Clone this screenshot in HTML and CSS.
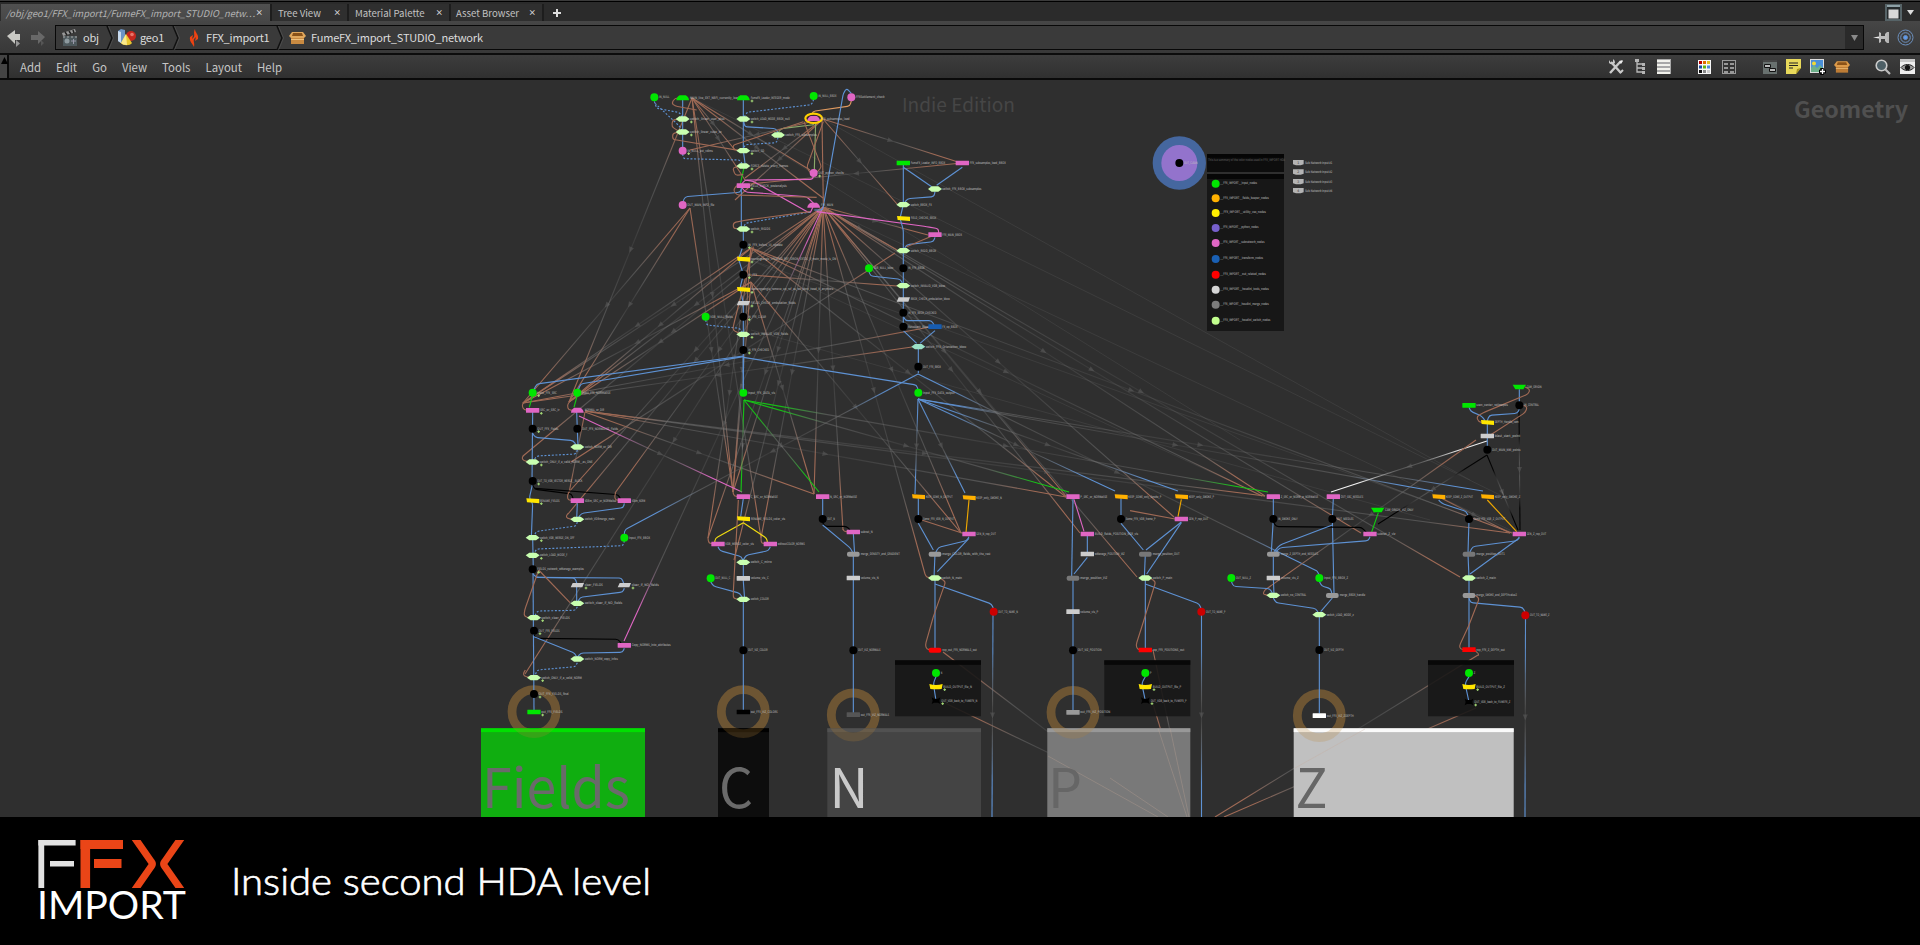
FILE: index.html
```
<!DOCTYPE html>
<html lang="en">
<head>
<meta charset="utf-8">
<title>FumeFX import network</title>
<link rel="stylesheet" href="styles.css">
</head>
<body>
<div class="app">
  <div class="tabs">
    <div class="tab tab-active"><span class="tab-name">/obj/geo1/FFX_import1/FumeFX_import_STUDIO_netw…</span><span class="close">×</span></div>
    <div class="tab tab-tree"><span class="tab-name">Tree View</span><span class="close">×</span></div>
    <div class="tab tab-material"><span class="tab-name">Material Palette</span><span class="close">×</span></div>
    <div class="tab tab-asset"><span class="tab-name">Asset Browser</span><span class="close">×</span></div>
    <svg class="plus" width="10" height="10" viewBox="0 0 10 10"><path d="M5 1v8M1 5h8" stroke="#ddd" stroke-width="2"/></svg>
    <div class="tabs-right">
      <svg width="17" height="17" viewBox="0 0 17 17"><rect width="17" height="17" fill="#566367"/><rect x="2" y="2" width="13" height="13" fill="#262b2d"/><rect x="2" y="1" width="13" height="2" fill="#8ea0a6"/><rect x="3.500" y="5.500" width="10" height="9" fill="#d8d8d8"/></svg>
      <svg width="7" height="5" viewBox="0 0 7 5"><path d="M0 0h7L3.500 5z" fill="#ddd"/></svg>
    </div>
  </div>

  <div class="pathbar">
    <svg class="nav" width="40" height="22" viewBox="0 0 40 22"><path d="M1 8L9 2v4h5v6H9v4z" fill="#c9c9c4"/><path d="M10 12v7l4-3.500z" fill="#999"/><path d="M39 9L32 3v4h-7v5h7v4z" fill="#686868"/><path d="M35 12v6l3-3z" fill="#555"/></svg>
    <div class="path">
      <div class="crumb crumb-obj">
        <svg width="18" height="20" viewBox="0 0 18 20"><path d="M1 5l13-4 1 3L2 8z" fill="#999"/><path d="M4 4l2 3M8 3l2 3M12 2l1 3" stroke="#222" stroke-width="1.500"/><rect x="2" y="8" width="14" height="10" fill="#4e595d"/><path d="M2 9h14" stroke="#aaa" stroke-dasharray="2 2"/><circle cx="6" cy="13" r="2.500" fill="#8d999e"/><path d="M10 13h5M12.500 11v5" stroke="#99a" /></svg>
        <span>obj</span>
      </div>
      <svg class="sep" width="8" height="24" viewBox="0 0 8 24"><path d="M1 0l5 12-5 12" fill="none" stroke="#111" stroke-width="1.500"/><path d="M2.500 0l5 12-5 12" fill="none" stroke="#555" stroke-width=".7"/></svg>
      <div class="crumb crumb-geo">
        <svg width="18" height="18" viewBox="0 0 18 18"><path d="M0 2l3-2 4 1v11l-4 2-3-2z" fill="#6c94c4"/><path d="M0 2l3 1v11l-3-2z" fill="#c8daee"/><circle cx="13" cy="7" r="5" fill="#c5281f"/><circle cx="14" cy="5.500" r="1.800" fill="#e8766b"/><path d="M8 5l6 9c-2 3-9 3-11 0z" fill="#e8c62f"/><path d="M8 5l1 11c-3 0-5-1-6-2z" fill="#fbe98a"/></svg>
        <span>geo1</span>
      </div>
      <svg class="sep" width="8" height="24" viewBox="0 0 8 24"><path d="M1 0l5 12-5 12" fill="none" stroke="#111" stroke-width="1.500"/><path d="M2.500 0l5 12-5 12" fill="none" stroke="#555" stroke-width=".7"/></svg>
      <div class="crumb crumb-ffx">
        <svg width="10" height="18" viewBox="0 0 10 18"><path d="M6 0c0 4 4 5 3 10l-3 2 1-4-2 2c-1 3 1 4 0 8-1-3-5-5-4-10l3-2-1 4 2-2c1-3-1-4 1-8z" fill="#ee4312"/></svg>
        <span>FFX_import1</span>
      </div>
      <svg class="sep" width="8" height="24" viewBox="0 0 8 24"><path d="M1 0l5 12-5 12" fill="none" stroke="#111" stroke-width="1.500"/><path d="M2.500 0l5 12-5 12" fill="none" stroke="#555" stroke-width=".7"/></svg>
      <div class="crumb crumb-net">
        <svg width="17" height="14" viewBox="0 0 17 14"><path d="M3 1h11l3 4-2 2H2L0 5z" fill="#e0a75c"/><path d="M4 2h9l1 3H3z" fill="#8a5218"/><path d="M2 7h13v6H2z" fill="#c98a41"/><path d="M2 8h13v1H2z" fill="#eec27f"/></svg>
        <span>FumeFX_import_STUDIO_network</span>
      </div>
      <div class="drop"><svg width="7" height="6" viewBox="0 0 7 6"><path d="M0 0h7L3.500 6z" fill="#8a8a8a"/></svg></div>
    </div>
    <svg class="pin" width="17" height="13" viewBox="0 0 17 13"><path d="M0 6.500L6 5.500v2z" fill="#eee"/><path d="M6 1v11l2-1V8h4v2l2 2V1l-2 2v2H8V2z" fill="#bbb"/><path d="M15 1v11" stroke="#ddd" stroke-width="1.500"/></svg>
    <svg class="target" width="17" height="17" viewBox="0 0 17 17" fill="none" stroke="#6b8fbd"><circle cx="8.500" cy="8.500" r="7.500"/><circle cx="8.500" cy="8.500" r="4.800"/><circle cx="8.500" cy="8.500" r="2" fill="#5c9af0"/></svg>
  </div>

  <div class="menubar">
    <div class="grip"><svg width="7" height="7" viewBox="0 0 7 7"><path d="M0 7L3.500 0 7 7z" fill="#000"/></svg></div>
    <div class="menu"><span>Add</span><span>Edit</span><span>Go</span><span>View</span><span>Tools</span><span>Layout</span><span>Help</span></div>
    <div class="tools">
      <svg class="t-wrench" width="16" height="16" viewBox="0 0 16 16"><path d="M3 3l10 11M13 2L2 14" stroke="#c9c9c9" stroke-width="2.400"/><path d="M1 1l2 3 2-1 0-3a4 4 0 0 1 2 4 4 4 0 0 1-6 0z" fill="#c9c9c9"/><path d="M11 3l3-2 1 1-2 3z" fill="#eee"/><path d="M12 14l3-3" stroke="#c9c9c9" stroke-width="2"/></svg>
      <svg class="t-tree" width="11" height="15" viewBox="0 0 11 15"><path d="M2 2v11h7M2 5h7M2 9h7" fill="none" stroke="#bbb" stroke-width="1.300"/><path d="M0 0h4v3H0zM7 4h3v3H7zM7 8h3v3H7zM7 12h3v3H7z" fill="#b5b5b5"/></svg>
      <svg class="t-list" width="14" height="15" viewBox="0 0 14 15"><path d="M0 0h14v15H0z" fill="#a8a8a8"/><path d="M0 1h13v2H0zM0 5h13v2H0zM0 9h13v2H0zM0 13h13v2H0z" fill="#f2f2ec"/></svg>
      <svg class="t-grid" width="13" height="14" viewBox="0 0 13 14"><path d="M0 0h13v14H0z" fill="#f8f8f8"/><path d="M1 1h3v3H1z" fill="#b00"/><path d="M5 1h3v3H5z" fill="#e06a00"/><path d="M9 1h3v3H9z" fill="#e2bc20"/><path d="M1 5.500h3v3H1z" fill="#1c4fa8"/><path d="M5 5.500h3v3H5z" fill="#62b512"/><path d="M9 5.500h3v3H9z" fill="#4f8be0"/><path d="M1 10h3v3H1z" fill="#111"/><path d="M5 10h3v3H5z" fill="#888"/><path d="M9 10h3v3H9z" fill="#ccc"/></svg>
      <svg class="t-cells" width="14" height="14" viewBox="0 0 14 14"><rect x=".5" y=".5" width="13" height="13" fill="#333" stroke="#999"/><path d="M2 4h4M8 4h4M2 8h4M8 8h4M2 12h4M8 12h4" stroke="#bbb" stroke-width="1.500"/></svg>
      <svg class="t-net" width="14" height="14" viewBox="0 0 14 14"><path d="M0 0h14v14H0z" fill="#69716f"/><path d="M0 0h14v2H0z" fill="#444"/><path d="M1.500 4.500h6v3h-6zM6.500 8.500h6v3h-6z" fill="#bbb" stroke="#111"/></svg>
      <svg class="t-note" width="15" height="15" viewBox="0 0 15 15"><path d="M0 0h15v9l-5 6H0z" fill="#e8d95b"/><path d="M15 9l-5 6 1-5z" fill="#a8941e"/><path d="M3 4h9M3 6.500h9M3 9h4" stroke="#222" stroke-width="1.200"/></svg>
      <svg class="t-image" width="16" height="16" viewBox="0 0 16 16"><path d="M0 0h14v14H0z" fill="#ddd"/><path d="M1 1h12v12H1z" fill="#4a8fd8"/><circle cx="4" cy="4.500" r="2" fill="#f2da34"/><path d="M1 9l3-3 3 3 3-3 3 3v4H1z" fill="#6db08a"/><path d="M12 9v7M9 12.500h7" stroke="#000" stroke-width="3.500"/><path d="M12.500 10v5M10 12.500h5" stroke="#fff" stroke-width="1.300"/></svg>
      <svg class="t-box" width="16" height="14" viewBox="0 0 17 14"><path d="M3 1h11l3 4-2 2H2L0 5z" fill="#dc9a49"/><path d="M4 2h9l1 3H3z" fill="#8a5218"/><path d="M2 7h13v6H2z" fill="#bd7c35"/><path d="M2 8h13v1H2z" fill="#e8b56d"/></svg>
      <svg class="t-zoom" width="16" height="16" viewBox="0 0 16 16"><circle cx="6.500" cy="6.500" r="5.300" fill="#4d5f66" stroke="#ccc" stroke-width="1.600"/><path d="M10.500 10.500l4.500 4.500" stroke="#bbb" stroke-width="2.200"/></svg>
      <svg class="t-eye" width="15" height="15" viewBox="0 0 15 15"><path d="M0 0h15v15H0z" fill="#eee"/><path d="M0 0h15v3H0z" fill="#c8c8c8"/><path d="M1 8.500c3-4 10-4 13 0-3 4-10 4-13 0z" fill="#999" stroke="#222"/><circle cx="7.500" cy="8.500" r="2.600" fill="#111"/></svg>
    </div>
  </div>

  <svg class="network" id="network" width="1920" height="737" viewBox="0 80 1920 737"></svg>

  <footer class="caption">
    <div class="brand">
      <svg class="mark" width="148" height="48" viewBox="38 840 148 48" aria-label="FFX">
        <g fill="#e2e2e2"><rect x="38.400" y="840" width="5.800" height="48"/><rect x="38.400" y="840" width="37.200" height="5.500"/><rect x="50" y="861" width="24" height="5.500"/></g>
        <g fill="#ea4517"><rect x="80.500" y="840" width="9.600" height="48"/><rect x="80.500" y="840" width="42.500" height="9"/><rect x="94" y="859" width="27.500" height="9"/></g>
        <g fill="none" stroke="#ea4517" stroke-width="7.200"><path d="M132 834L151.500 862Q153 864 151.500 866L132 894"/><path d="M184 834L164.500 862Q163 864 164.500 866L184 894"/></g>
      </svg>
      <svg class="wordmark" width="150" height="34" viewBox="0 0 150 34"><text x="-1" y="31" textLength="149" lengthAdjust="spacingAndGlyphs">IMPORT</text></svg>
    </div>
    <svg class="headline" width="430" height="50" viewBox="0 0 430 50"><text x="0" y="37" textLength="420" lengthAdjust="spacingAndGlyphs">Inside second HDA level</text></svg>
  </footer>
</div>
<script src="graph.js"></script>
</body>
</html>
```
FILE: styles.css
```
* { box-sizing: border-box; }
body { margin: 0; background: #000; font-family: "Noto Sans CJK SC", "Open Sans", sans-serif; font-size: 12px; color: #d0d0d0; overflow: hidden; }
svg { display: block; flex: none; }
.app { display: flex; flex-direction: column; width: 1920px; height: 945px; }

.tabs { display: flex; align-items: stretch; height: 21px; padding-top: 3px; border-top: 1px solid #3b3b3b; background: #2b2b2b; box-shadow: inset 0 1px 0 #000; flex: none; }
.tab { display: flex; align-items: center; justify-content: space-between; padding: 0 6px 0 6px; background: #2f2f2f; border-right: 2px solid #1d1d1d; font-size: 9.6px; line-height: 16px; color: #c2c2c2; white-space: nowrap; }
.tab-active { width: 271px; margin-left: 1px; padding: 0 7px 0 5px; background: linear-gradient(#505050, #474747); font-size: 9.3px; font-style: italic; color: #b4b4b4; }
.tab-tree { width: 77px; }
.tab-material { width: 102px; }
.tab-asset { width: 93px; padding-left: 5px; }
.close { font-style: normal; font-weight: 700; font-size: 7.5px; color: #ddd; }
.plus { align-self: center; margin-left: 8px; }
.tabs-right { display: flex; align-items: center; gap: 5px; margin-left: auto; padding-right: 6px; }

.pathbar { display: flex; align-items: center; height: 34px; padding: 0 6px 0 6px; background: linear-gradient(#464646, #383838); border-bottom: 2px solid #0c0c0c; flex: none; }
.nav { margin: 3px 9px 0 0; }
.path { display: flex; align-items: center; width: 1810px; height: 25px; background: #3a3a3a; border: 1px solid #080808; margin-top: 1px; }
.crumb { display: flex; align-items: center; height: 22px; font-size: 11px; line-height: 21px; letter-spacing: -.18px; color: #dcdcdc; white-space: nowrap; }
.crumb span { margin-top: -1px; }
.crumb-obj { width: 50px; padding-left: 5px; gap: 4px; }
.crumb-geo { width: 58px; padding-left: 4px; gap: 4px; }
.crumb-ffx { width: 96px; padding-left: 9px; gap: 7px; }
.crumb-net { padding-left: 5px; gap: 5px; }
.drop { display: flex; align-items: center; justify-content: center; width: 18px; height: 23px; margin-left: auto; background: #2a2a2a; }
.pin { margin-left: 9px; }
.target { margin-left: 7px; }

.menubar { display: flex; align-items: center; height: 25px; background: linear-gradient(#3d3d3d, #303030); border-bottom: 2px solid #0a0a0a; flex: none; }
.grip { width: 9px; height: 23px; padding: 2px 0 0 1px; background: #444; border-right: 2px solid #0a0a0a; }
.menu { display: flex; gap: 15px; margin-left: 11px; font-size: 11.4px; line-height: 22px; color: #c6c6c6; }
.tools { display: flex; align-items: center; margin-left: auto; padding-right: 5px; }
.t-tree { margin-left: 11px; }
.t-list { margin-left: 11px; }
.t-grid { margin-left: 27px; }
.t-cells { margin-left: 11px; }
.t-net { margin-left: 27px; }
.t-note { margin-left: 9px; }
.t-image { margin-left: 9px; }
.t-box { margin-left: 8px; }
.t-zoom { margin-left: 25px; }
.t-eye { margin-left: 9px; }

.network { background: #2f2f2f; }
.network text { font-family: "Noto Sans CJK SC", "Open Sans", sans-serif; }
.node-label { font-size: 10.5px; fill: #c4c4c4; text-rendering: geometricPrecision; }
.network .dim { fill: #666; }
.network .port { fill: #333; }
.indie { font-size: 19px; fill: #464646; }
.geometry { font-size: 22px; font-weight: 700; fill: #505050; }
.panel-name { font-size: 54.5px; }

.caption { display: flex; height: 128px; background: #000; }
.brand { display: flex; flex-direction: column; width: 148px; margin: 23px 0 0 38px; }
.wordmark text { font-family: Lato, sans-serif; font-size: 39px; fill: #fff; }
.headline { margin: 41px 0 0 45px; }
.headline text { font-family: Lato, sans-serif; font-size: 37.5px; font-weight: 300; fill: #fff; stroke: #fff; stroke-width: .7; }
```
FILE: graph.js
```
const svg = document.getElementById('network');
const C = { G: '#00e600', P: '#e066c4', K: '#000', Y: '#ffe600', O: '#ffb000', W: '#cdcdcd', S: '#c8ffb0',
  T: '#9be0c6', B: '#175cb0', R: '#ff0000', D: '#cc0000', M: '#999', N: '#777', X: '#555', F: '#fff' };
const E = { b: '#5e92d4', n: '#a06a55', p: '#e066c4', g: '#14c814', k: '#000', y: '#f0dc10', o: '#f0a800', w: '#f4f4f4', l: '#8aa86a', t: '#e09a60' };
let out = '';
let gradients = 0;

// Rounded polyline through the given points
function wire(style, pts) {
  const dash = style.length > 1 ? ' stroke-dasharray="6 5"' : '';
  let d = 'M' + pts[0] + ' ' + pts[1];
  for (let i = 2; i < pts.length; i += 2) {
    const last = i + 2 >= pts.length;
    if (last) { d += 'L' + pts[i] + ' ' + pts[i + 1]; continue; }
    const px = pts[i - 2], py = pts[i - 1], x = pts[i], y = pts[i + 1], nx = pts[i + 2], ny = pts[i + 3];
    const a = Math.min(.5, 8 / Math.hypot(px - x, py - y)), b = Math.min(.5, 8 / Math.hypot(nx - x, ny - y));
    d += `L${x + (px - x) * a} ${y + (py - y) * a}Q${x} ${y} ${x + (nx - x) * b} ${y + (ny - y) * b}`;
  }
  out += `<path d="${d}" fill="none" stroke="${E[style[0]]}" stroke-width="3.4"${dash}/>`;
}

function node(kind, color, x, y, label, mark) {
  const f = `fill="${C[color]}"`;
  let half = 22;
  if (kind === 'c') { out += `<circle cx="${x}" cy="${y}" r="12" ${f}/>`; half = 14; }
  if (kind === 'r') out += `<rect x="${x - 20}" y="${y - 7}" width="40" height="14" rx="1" ${f}/>`;
  if (kind === 'm') out += `<rect x="${x - 19}" y="${y - 7}" width="38" height="15" rx="6" ${f}/>`;
  if (kind === 's') out += `<path d="M${x - 21} ${y}L${x - 10} ${y - 8}H${x + 10}L${x + 21} ${y}L${x + 10} ${y + 8}H${x - 10}z" ${f}/>`;
  if (kind === 'd') out += `<path d="M${x - 19} ${y + 7}Q${x - 19} ${y - 2} ${x - 9} ${y - 8}H${x + 9}Q${x + 19} ${y - 2} ${x + 19} ${y + 7}z" ${f}/>`;
  if (kind === 'y') out += `<path d="M${x - 19} ${y - 7}L${x + 20} ${y - 5}V${y + 8}L${x - 17} ${y + 5}z" ${f}/>`;
  if (kind === 'w') out += `<path d="M${x - 14} ${y - 6}H${x + 20}L${x + 15} ${y + 7}H${x - 20}z" ${f}/>`;
  if (kind === 't') out += `<path d="M${x - 20} ${y - 7}H${x + 20}L${x + 12} ${y + 7}H${x - 12}z" ${f}/>`;
  if (kind === 'u') out += `<path d="M${x - 20} ${y - 8}Q${x} ${y - 2} ${x + 20} ${y - 8}L${x + 17} ${y + 7}Q${x} ${y + 9} ${x - 17} ${y + 7}z" ${f}/>`;
  if (kind === 'x') { out += `<path d="M${x - 13} ${y - 10}l7 4h12l7-4-3 10 3 10-7-4h-12l-7 4 3-10z" ${f}/>`; half = 16; }
  if (label) out += `<text class="node-label" x="${x + half}" y="${y + 3}" textLength="${label.length * 4.5}" lengthAdjust="spacingAndGlyphs">${label}</text>`;
  if (mark) out += `<path d="M${x + half} ${y + 9}h8M${x + half + 4} ${y + 5}v8" stroke="#a6dc78" stroke-width="3"/>`;
}

function cluster(ox, oy, wires, nodes) {
  out += `<g transform="translate(${ox} ${oy}) scale(.33333)">`;
  wires.forEach(w => wire(w[0], w.slice(1)));
  nodes.forEach(n => node(...n));
  out += '</g>';
}

// Long dependency link: coloured at the ends, fading in the middle
function link(x1, y1, x2, y2, color = '#a06a55', endColor = color, mid = .16) {
  const id = 'f' + gradients++, len = Math.hypot(x2 - x1, y2 - y1), s = Math.min(.45, 85 / len);
  out += `<linearGradient id="${id}" gradientUnits="userSpaceOnUse" x1="${x1}" y1="${y1}" x2="${x2}" y2="${y2}">` +
    `<stop offset="0" stop-color="${color}"/><stop offset="${s * .45}" stop-color="${color}" stop-opacity=".9"/><stop offset="${s}" stop-color="#777" stop-opacity=".5"/>` +
    `<stop offset=".5" stop-color="#777" stop-opacity="${mid}"/><stop offset="${1 - s}" stop-color="#777" stop-opacity=".5"/><stop offset="${1 - s * .4}" stop-color="${endColor}"/></linearGradient>` +
    `<path d="M${x1} ${y1}L${x2} ${y2}" stroke="url(#${id})" stroke-width="1.1"/>`;
  const ang = Math.atan2(y2 - y1, x2 - x1) * 180 / Math.PI;
  out += `<path d="M-3 -2.500L3 0L-3 2.500z" transform="translate(${(x1 + x2) / 2} ${(y1 + y2) / 2}) rotate(${ang})" fill="#666" opacity=".45"/>`;
}

// Faint background links
[[692,98,1240,440],[692,98,1500,495],[823,119,1470,480],[751,260,1265,497],[823,207,1510,530],[751,330,1430,520],
 [751,260,1515,533]].forEach(a =>
  out += `<path d="M${a[0]} ${a[1]}L${a[2]} ${a[3]}" stroke="#555" stroke-opacity=".35"/>`);

// Fans from the main hubs
[[523,403],[569,402],[523,456],[568,493],[615,493],[568,514],[525,674],[733,492],[708,538],[761,538],[734,560],
 [814,494],[843,530],[925,574],[961,533],[1066,496],[1080,533],[1137,577],[1174,517],[1265,496],[1361,533],[1460,577]]
  .forEach(t => link(823, 207, t[0], t[1]));
[[523,403],[569,402],[733,492],[708,538],[1066,497],[1262,496],[1512,533]].forEach(t => link(751, 248, t[0], t[1]));
[[523,403],[569,402],[733,492],[961,533],[814,494]].forEach(t => link(751, 282, t[0], t[1]));
[[569,402],[733,492],[523,403]].forEach(t => link(690, 208, t[0], t[1]));
[[823,198],[745,180],[735,150],[810,170],[733,492],[761,538]].forEach(t => link(692, 98, t[0], t[1]));
link(692, 98, 569, 402);
[[958,162],[897,204],[735,200],[745,178],[690,150]].forEach(t => link(823, 119, t[0], t[1]));
link(823, 207, 897, 250); link(823, 207, 928, 235); link(751, 275, 897, 286); link(930, 327, 523, 403); link(912, 347, 523, 403);
link(962, 163, 750, 184); link(895, 253, 571, 462); link(585, 411, 1066, 497); link(585, 411, 1265, 496); link(585, 412, 814, 494);
link(585, 411, 1510, 533); link(585, 412, 569, 493);
link(823, 207, 624, 641, '#e066c4'); link(579, 416, 742, 492, '#e066c4');
link(744, 400, 741, 492, '#14c814', '#14c814', 1);
link(744, 400, 819, 492, '#14c814', '#14c814', .5); link(744, 400, 1069, 492, '#14c814', '#14c814'); link(744, 400, 1268, 492, '#14c814', '#14c814');
[[915,494],[965,493],[1115,491],[1178,491],[1433,491],[1483,491]].forEach(t => link(918, 399, t[0], t[1], '#5e92d4'));
link(918, 374, 626.7, 528.7, '#5e92d4'); link(918, 374, 1317, 571, '#5e92d4');
link(1487, 441, 1331, 492, '#f4f4f4', '#f4f4f4', .7);
link(1487, 455, 1378, 524, '#000'); link(1487, 455, 1518, 530, '#000', '#000', 1); link(1519, 410, 1520, 530, '#000');
link(1476, 440, 1265, 590); link(943, 652, 1160, 817); link(945, 703, 1182, 817); link(1153, 650, 1188, 817); link(1153, 704, 1187, 817);
link(1478, 655, 1215, 817); link(1476, 708, 1224, 817); link(1439, 497, 1510, 533);
link(993, 614, 992, 817, '#5e92d4'); link(1201.5, 614, 1201.5, 817, '#5e92d4'); link(1525.5, 618, 1525, 817, '#5e92d4');

// Output rings
const rings = [[534, 711.7], [743.3, 711.7], [853.3, 715], [1073, 712.3], [1319.3, 715.7]];
rings.forEach(r => out += `<circle cx="${r[0]}" cy="${r[1]}" r="22" fill="none" stroke="#6d5533" stroke-width="8.800"/>`);

// Output build boxes
[[895,660.3],[1104.3,660.3],[1428,660.3]].forEach(b =>
  out += `<rect x="${b[0]}" y="${b[1]}" width="86" height="56" fill="#171717" fill-opacity=".9"/><rect x="${b[0]}" y="${b[1]}" width="86" height="4.500" fill="#080808"/>`);

// Loader and check stage
cluster(630, 80, [
  ['bd',73,64,80,85,150,98,158,117],['bd',75,70,150,140,158,156],['b',158,60,158,212],['bd',158,222,160,236,330,240,340,258],
  ['b',340,54,340,212],['bd',551,58,545,74,350,97,340,117],['b',340,117,344,140,438,146,444,160],['bd',444,172,440,188,345,194,340,212],
  ['b',340,212,346,258],['g',342,262,330,317],['t',664,62,660,78,548,94,545,108],['l',551,126,552,134,452,146,444,160],['l',557,125,553,270],
  ['b',553,390,578,390,640,40,650,25,664,40],['b',334,317,334,447],['b',334,328,330,337,165,350,158,368],
  ['p',551,285,548,298,344,300,334,315],['p',334,320,345,336,530,350,551,370],['p',344,300,370,304,540,400,551,376],
  ['p',560,395,890,440,925,446,926,460],['bd',540,396,345,430,340,447],['b',340,447,340,494,326,537,340,584,330,625,340,670,340,935],
  ['bd',227,720,230,735,330,745,340,763],['n',150,117,128,120,125,140,150,156],['n',150,156,128,160,128,178,330,212],
  ['n',158,54,135,54,125,70,135,78,200,90],['n',330,212,312,210,308,196,520,125],['n',330,258,308,264,316,286,340,284],
  ['n',320,317,310,330,320,345,560,352],['n',335,447,310,445,310,428,350,420,540,395],['n',335,763,308,750,312,730,370,500],
  ['n',540,277,530,262,580,125],['n',560,277,575,262,522,125],['n',576,120,580,370],
  ['b',820,249,820,374,810,415,820,450,820,617,820,740],['b',820,262,905,320],['b',997,262,920,316],['b',915,335,912,350,832,356,820,374],
  ['b',915,472,910,485,830,494,820,512],['b',717,575,722,588,812,598,820,617],['b',820,708,826,722,905,722,915,740],
  ['b',820,752,860,790],['b',915,752,870,790],['b',865,800,865,880],
  ['b',340,832,860,915,865,932],['n',915,464,830,500]
], [
  ['c','G',73,52,'IN_NULL'],['d','G',158,54,'MAIN_live_EXT_NBFI_currently_loaded'],['d','G',340,54,'FumeFX_Loader_INTEGER_mode',1],
  ['c','G',551,48,'IN_NULL_BBOX'],['c','P',664,52,'FFXSettlement_check'],['s','S',158,117,'switch_linear_user_plus',1],['s','S',158,156,'switch_linear_cube_to',1],
  ['c','P',158,212,'IN_NULL_ext_vdims',1],['s','S',340,117,'switch_LOAD_MODE_BBOX_null',1],['s','S',444,165,'switch_FFX_subsamples'],
  ['s','S',340,212,'switch_3D',1],['s','S',340,258,'FORCE_delete_every_frames',1],['r','P',340,317,'FIELD_CHECK_postanalysis',1],
  ['c','P',551,279,'OUT_python_checks',1],['c','P',158,375,'OUT_MAIN_INFO_file'],['d','P',551,376,'FFX_MAIN'],['s','S',340,447,'switch_RIGIDS',1],
  ['c','K',340,494,'IN_FFX_before_UI_update',1],['y','Y',340,537,'rearrangeangle_UPDATED_REF_ORION_EXTDS_if_main_mode_is_ON',1],
  ['c','K',340,584,'IN_FFX',1],['y','Y',340,628,'rearrangeangle_remove_up_ref_as_we_dont_need_it_anymore',1],
  ['w','W',340,669,'FIELDS_CHECK_embulation_fields',1],['c','K',340,710,'IN_FFX_CLEAR',1],['c','G',227,710,'VDB_NULL_fields'],
  ['s','S',340,763,'switch_INVALID_VDB_fields',1],['c','K',340,810,'IN_FFX_CHECKED',1],['c','G',340,964,'input_FFX_DATA_vis'],
  ['r','G',820,249,'FumeFX_Loader_INFO_BBOX'],['r','P',997,249,'FFX_subsamples_load_BBOX'],['s','S',915,327,'switch_FFX_BBOX_subsamples'],
  ['s','S',820,374,'switch_BBOX_FX'],['y','Y',820,415,'FIELD_CHECKS_BBOX'],['r','P',915,464,'FFX_MAIN_BBOX'],['s','S',820,512,'switch_RIGID_BBOX'],
  ['c','G',717,565,'VDB_NULL_bbox'],['c','K',820,565,'IN_FFX_BBOX'],['s','S',820,617,'switch_INVALID_VDB_bbox'],
  ['w','W',820,658,'BBOX_CHECK_embulation_bbox'],['c','K',820,698,'IN_FFX_BBOX_CHECKED'],['c','K',820,740,'Resultant_Bbox'],['r','B',915,740,'FX_op_BBOX'],
  ['s','T',865,800,'switch_FFX_Orientation_bbox'],['c','K',865,860,'OUT_FFX_BBOX'],['c','G',865,938,'input_FFX_DATA_output']
].map(n => n[4] === 'input_FFX_DATA_vis' ? ['c','G',340,938,n[4]] : n));
out += `<g transform="translate(630 80) scale(.33333)"><ellipse cx="551" cy="115" rx="25" ry="14" fill="#3a2430" stroke="#ffd000" stroke-width="6.500"/>`;
node('d', 'P', 551, 116, 'FFX_subsamples_load'); out += '</g>';

// Fields and colour branches
cluster(460, 370, [
  ['b',850,-42,230,42,218,66],['b',850,-40,362,42,352,66],['g',218,75,208,112],['g',352,75,342,112],
  ['b',218,125,216,340],['b',350,125,354,231],['b',218,190,225,202,340,212,352,231],['bd',352,240,348,252,230,258,218,276],
  ['b',218,340,208,385,218,400,214,503],['k',218,345,225,358,335,372,340,388],['k',225,355,475,374,482,388],
  ['b',352,400,350,448],['b',493,400,490,413,364,430,352,448],['bd',352,456,348,468,230,484,218,503],['b',218,503,220,598],
  ['bd',493,512,490,527,230,537,218,556],['b',500,476,493,484,493,498],['b',219,598,220,740],['b',218,610,228,622,345,624,352,645],
  ['b',228,622,485,624,493,645],['b',350,650,350,700],['b',493,655,488,666,360,682,352,700],['bd',352,710,346,721,232,723,222,743],
  ['b',220,743,222,1020],['k',222,795,228,805,475,808,485,822],['b',222,800,345,850,352,867],['b',493,835,488,847,362,849,352,862],
  ['bd',352,878,346,890,232,900,222,923],['n',236,600,194,720,192,738,205,743],['n',236,600,330,698],
  ['n',210,121,192,120,186,108,190,98],['n',345,121,325,120,322,105,328,96],['n',215,276,190,272,186,264,190,257],
  ['n',345,392,324,390,322,378,326,368],['n',485,392,466,390,464,378,467,368],['n',345,448,322,446,318,438,325,430],
  ['n',210,923,192,918,190,910,196,900],['n',840,380,822,379,819,366],
  ['b',850,0,850,60],['b',850,-42,850,10],['b',850,385,842,440],['y',850,458,766,505,764,518],['y',850,458,920,505,922,516],
  ['b',774,530,780,542,845,560,850,577],['b',931,530,925,542,858,556,850,570],['b',850,577,850,635,854,688],['b',752,635,760,648,840,670,850,688],
  ['b',850,688,850,1020],['n',770,522,746,520,744,504],['n',925,522,904,520,903,504],['n',838,688,820,685,820,665,835,390]
], [
  ['c','G',218,68,'input_FFX_SRC',1],['c','G',352,68,'input_FFX_NORmalISE'],['r','P',218,121,'SRC_or_SRC_tr',1],['d','P',352,121,'NORMAL_or_DIR'],
  ['c','K',218,176,'OUT_FFX_Fields',1],['c','K',352,176,'OUT_FFX_NORMALISE_Fields'],['s','S',352,231,'switch_NORM_or_DIR'],
  ['s','S',218,276,'switch_ONLY_if_a_valid_NORM__as_ONE',1],['c','K',218,333,'OUT_TO_VDB_VECTOR_MERGE__BLOCK',1],['y','Y',218,392,'RENAME_FIELDS',1],
  ['r','P',352,392,'VDBm_SRC_or_NORMalise'],['r','P',493,392,'VDBm_NORM'],['s','S',352,448,'switch_VDBmerge_main'],['s','S',218,503,'switch_VDB_MERGE_ON_OFF',1],
  ['c','G',493,503,'input_FFX_BBOX'],['s','S',218,556,'switch_LOAD_MODE_f',1],['c','K',218,598,'FIELDS_network_wManage_examples',1],
  ['w','W',352,645,'clear_FIELDS',1],['w','W',493,645,'clear_if_NO_fields',1],['s','S',352,700,'switch_clear_if_NO_fields'],['s','S',222,743,'switch_clear_FIELDS',1],
  ['c','K',222,782,'OUT_FFX_FIELDS',1],['r','P',493,826,'Copy_NORMS_into_attributes'],['s','S',352,867,'switch_NORM_copy_infos'],
  ['s','S',222,923,'switch_ONLY_if_a_valid_NORM',1],['c','K',222,972,'OUT_FFX_FIELDS_final',1],['r','G',222,1026,'out_FFX_FIELDS',1],
  ['r','P',850,380,'C_SRC_or_NORMalISE'],['y','Y',850,446,'RENAME_FIELDS_color_vis'],['r','P',774,522,'VDB_MERGE_color_vis'],['r','P',931,522,'withoutCOLOR_NORMS'],
  ['s','S',850,577,'switch_C_mirro'],['c','G',752,625,'OUT_NULL_C'],['r','W',850,625,'volume_vis_C'],['s','S',850,688,'switch_COLOR'],
  ['c','K',850,841,'OUT_VIZ_COLOR'],['r','K',850,1026,'out_FFX_VIZ_COLORS']
]);

// Normals branch
cluster(780, 470, [
  ['b',128,85,128,147],['k',128,158,135,169,200,169,210,180],['b',128,165,212,235,220,252],['b',220,190,224,252],['b',220,252,220,730],
  ['b',415,85,415,147],['b',415,160,460,240],['o',567,90,558,188],['b',567,200,560,212,475,232,465,252],['b',567,205,472,305],
  ['b',465,252,462,324],['b',465,330,465,535],['b',465,342,635,402,641,418],['n',480,324,497,335,460,440,436,525,440,538,455,540],
  ['n',425,150,548,190],['n',455,324,440,322,435,312],['n',205,186,192,184,189,178],
  ['b',468,620,460,640,468,692]
], [
  ['r','P',128,80,'N_SRC_or_NORMalISE'],['c','K',128,147,'OUT_N'],['r','P',220,186,'subnet_N'],['m','M',220,252,'merge_DENSITY_and_GRADIENT'],
  ['r','W',220,324,'volume_vis_N'],['c','K',220,541,'OUT_VIZ_NORMALS'],['r','X',220,734,'out_FFX_VIZ_NORMALS'],
  ['y','O',415,80,'KEEP_SOME_N_OUTPUT'],['y','O',567,83,'KEEP_only_SMOKE_N'],['c','K',415,147,'Some_FFX_VDB_N_OUTPUT'],['r','P',567,192,'GEN_N_rop_OUT'],
  ['m','M',465,252,'merge_COLOR_fields_with_the_rest'],['s','S',465,324,'switch_N_main'],['c','D',641,425,'OUT_TO_NAME_N'],
  ['m','R',465,540,'rop_out_FFX_NORMALS_out'],['c','G',468,609,'N'],['u','Y',468,650,'BUILD_OUTPUT_file_N',1],['x','K',468,692,'OUT_VDB_back_to_FUMEFX_N',1]
]);

// Position branch
cluster(1030, 470, [
  ['b',129,85,125,318],['p',132,88,162,184],['b',172,195,172,252],['b',172,262,132,312],['b',129,324,129,722],
  ['b',273,85,273,147],['b',273,160,340,240],['o',454,88,444,140],['b',454,156,348,240],['b',454,158,350,312],['b',346,252,343,324],['b',346,330,346,535],
  ['b',346,342,508,402,514,418],['n',360,324,377,335,345,440,318,525,322,538,335,540],['n',435,147,300,122],
  ['b',346,620,335,640,346,692]
], [
  ['r','P',129,80,'P_SRC_or_NORMalISE'],['y','O',273,80,'KEEP_SOME_only_Smoke_P'],['y','O',454,80,'KEEP_only_SMOKE_P'],['c','K',273,147,'Some_FFX_VDB_frame_P'],
  ['r','P',454,147,'GEN_P_rop_OUT'],['r','P',172,192,'BUILD_fields_POSITION_RGB_vis'],['r','W',172,252,'wManage_POSITION_VIZ'],['m','N',346,252,'merge_position_OUT'],
  ['m','N',129,324,'merge_position_VIZ'],['s','S',346,324,'switch_P_main'],['r','W',129,425,'volume_vis_P'],['c','D',514,425,'OUT_TO_NAME_P'],
  ['c','K',129,541,'OUT_VIZ_POSITION'],['r','R',346,540,'rop_FFX_POSITIONS_out'],['r','M',129,727,'out_FFX_VIZ_POSITION'],
  ['c','G',346,609,'P'],['u','Y',346,650,'BUILD_OUTPUT_file_P',1],['x','K',346,692,'OUT_VDB_back_to_FUMEFX_P',1]
]);

// Depth branch
cluster(1220, 370, [
  ['b',898,58,898,106],['b',898,118,892,130,808,136,800,157],['b',747,112,752,124,785,138,795,152],['b',802,157,802,239],
  ['n',915,51,930,58,925,72,790,128,770,140,775,155,790,158],['n',910,106,922,112,915,128,810,196],
  ['b',160,385,160,447,154,545],['b',340,385,337,447,342,670],['k',160,455,168,470,425,472,440,488],['b',337,465,180,525,162,545],['b',450,500,445,512,180,533,165,548],
  ['g',475,428,455,486],['b',160,560,160,625,162,676],['b',291,603,298,615],['b',34,634,40,649,150,656,160,676],['b',298,634,305,648,332,656,337,676],
  ['b',160,684,168,698,288,716,298,734],['b',337,684,302,725],['b',298,740,298,1030],['n',145,676,128,672,135,660],
  ['b',656,390,665,400,740,425,747,447],['b',747,447,744,552,747,624],['o',802,390,890,485],['b',898,500,892,512,758,530,747,552],['b',898,504,750,612],
  ['b',747,630,747,835],['b',747,685,752,698,908,712,916,728],['n',765,676,778,685,745,770,718,828,722,838,735,839],
  ['n',765,842,777,852,774,857],['b',747,920,735,940,747,996]
], [
  ['t','G',898,51,'CAM_ORIGIN'],['r','G',747,106,'scan_center_retimepos'],['c','K',898,106,'IN_CENTRAL'],['y','Y',802,157,'DEPTH_Handle_cam'],
  ['r','W',802,198,'blast_start_point'],['c','K',802,239,'OUT_MAIN_NMI_points'],['r','P',160,380,'Z_SRC_or_NORM_w_NORMalISE'],['r','P',340,380,'OUT_SRC_NEEDLES'],
  ['t','G',473,420,'CAM_ORIGIN_VIZ_ONLY'],['y','O',656,380,'KEEP_SOME_Z_OUTPUT'],['y','O',802,380,'KEEP_only_SMOKE_Z'],['c','K',160,447,'IN_SMOKE_ONLY'],
  ['c','K',337,447,'OUT_NEEDLES'],['c','K',747,447,'Some_FFX_VDB_Z_OUTPUT'],['r','P',450,492,'subnet_Z_viz'],['r','P',898,492,'GEN_Z_rop_OUT'],
  ['m','M',160,552,'merge_Z_DEPTH_and_NEEDLES'],['m','N',747,552,'merge_position_OUT1'],['c','G',34,624,'OUT_NULL_Z'],['r','W',160,624,'volume_vis_Z'],
  ['c','G',298,624,'input_FFX_BBOX_Z'],['s','S',747,624,'switch_Z_main'],['s','S',160,676,'switch_no_CENTRAL'],['m','M',337,676,'merge_BBOX_handle'],
  ['m','M',747,676,'merge_SMOKE_and_DEPTHvalue2'],['s','S',298,734,'switch_LOAD_MODE_z'],['c','D',916,736,'OUT_TO_NAME_Z'],['c','K',298,840,'OUT_VIZ_DEPTH'],
  ['r','R',747,839,'rop_FFX_Z_DEPTH_out'],['r','F',298,1037,'out_FFX_VIZ_ZDEPTH'],
  ['c','G',747,909,'Z'],['u','Y',747,950,'BUILD_OUTPUT_file_Z',1],['x','K',747,996,'OUT_VDB_back_to_FUMEFX_Z',1]
]);

// Legend
out += `<g transform="translate(1130 120) scale(.33333)"><circle cx="148" cy="129" r="80" fill="#45679f"/><circle cx="148" cy="129" r="54" fill="#9373cc"/>` +
  `<rect x="231" y="102" width="231" height="54" fill="#0d0d0d"/><rect x="231" y="102" width="231" height="11" fill="#050505"/>` +
  `<rect x="231" y="162" width="231" height="471" fill="#171717"/><rect x="231" y="162" width="231" height="15" fill="#070707"/>` +
  `<text class="node-label dim" x="234" y="122" textLength="231" lengthAdjust="spacingAndGlyphs">This is a summary of the color nodes used in FFX_IMPORT HDA</text>`;
node('c', 'K', 148, 129, 'OUT_CLEAN');
[['#00e600',191,'input_nodes'],['#ffb000',235,'fields_keeper_nodes'],['#ffee00',279,'utility_vex_nodes'],['#7760cc',324,'python_nodes'],['#e066c4',369,'subnetwork_nodes'],
 ['#1a60b4',417,'transform_nodes'],['#ff0000',464,'out_related_nodes'],['#d6d6d6',509,'houdini_tools_nodes'],['#7c7c7c',554,'houdini_merge_nodes'],['#c2ff8e',602,'houdini_switch_nodes']].forEach(r => {
  const t = '__FFX_IMPORT__' + r[2];
  out += `<circle cx="257" cy="${r[1]}" r="12" fill="${r[0]}"/><text class="node-label" x="271" y="${r[1] + 1}" textLength="${t.length * 4.4}" lengthAdjust="spacingAndGlyphs">${t}</text>`;
});
[128,156,185,212].forEach((y, i) => out += `<path d="M489 ${y - 8}H521V${y + 5}L512 ${y + 8}H498L489 ${y + 5}z" fill="#b4b4b4"/><text class="node-label port" x="502" y="${y + 4}">${i + 1}</text>` +
  `<text class="node-label" x="525" y="${y + 4}" textLength="82" lengthAdjust="spacingAndGlyphs">Sub-Network Input #${i + 1}</text>`);
out += '</g>';

// Output panels
out += '<clipPath id="low"><rect x="0" y="728.300" width="1920" height="90"/></clipPath>';
[[481,164,'#10ae10','#00e000'],[718,51,'#0d0d0d','#000'],[827.3,153.7,'#444','#515151'],
 [1047.3,143,'#797979','#989898'],[1293.7,220,'#c0c0c0','#fafafa']].forEach(p => {
  out += `<rect x="${p[0]}" y="728.300" width="${p[1]}" height="90" fill="${p[2]}"/><rect x="${p[0]}" y="728.300" width="${p[1]}" height="3.800" fill="${p[3]}"/>`;
});
rings.forEach(r => out += `<circle clip-path="url(#low)" cx="${r[0]}" cy="${r[1]}" r="22" fill="none" stroke="#b98234" stroke-opacity=".22" stroke-width="8.800"/>`);
out += '<g stroke="#c8a898" stroke-opacity=".3"><path d="M1158 728L1187 817M1170 728L1189 817M1048 756L1158 817M1110 778L1168 817M1365 729L1295 768"/></g>';
[['Fields',482,'#6a6a6a',148],['C',719,'#6a6a6a',34],['N',829.5,'#cacaca',39],['P',1048,'#666',34],['Z',1295.5,'#666',32]].forEach(t =>
  out += `<text class="panel-name" x="${t[1]}" y="808" fill="${t[2]}" textLength="${t[3]}" lengthAdjust="spacingAndGlyphs">${t[0]}</text>`);

out += '<text class="indie" x="902" y="112" textLength="113" lengthAdjust="spacingAndGlyphs">Indie Edition</text>' +
  '<text class="geometry" x="1794" y="118" textLength="114" lengthAdjust="spacingAndGlyphs">Geometry</text>';
svg.innerHTML = out;
```
